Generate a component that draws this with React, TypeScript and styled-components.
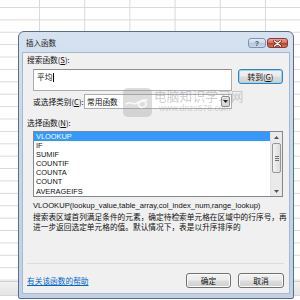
import React from "react";
import styled, { createGlobalStyle } from "styled-components";

const GlobalStyle = createGlobalStyle`
  html, body {
    margin: 0;
    padding: 0;
  }
  body {
    width: 300px;
    height: 300px;
    overflow: hidden;
    font-family: "Noto Sans CJK SC", "Liberation Sans", sans-serif;
  }
`;

const CJK = `"Noto Sans CJK SC", "Liberation Sans", sans-serif`;
const LATIN = `"Liberation Sans", "Noto Sans CJK SC", sans-serif`;

const Screen = styled.div`
  position: relative;
  width: 300px;
  height: 300px;
  overflow: hidden;
  background: #fff;
  display: flex;
  flex-direction: column;
`;

const Sheet = styled.div`
  height: 281px;
  background-color: #fff;
  background-image: linear-gradient(to right, #d9d9d9 1px, transparent 1px),
    linear-gradient(to bottom, #d9d9d9 1px, transparent 1px);
  background-size: 45.2px 100%, 100% 12.4px;
  background-position: 39px 0, 0 7px;
`;

const TabBar = styled.div`
  height: 13px;
  background: linear-gradient(#f1f1f1, #e4e4e4);
  border-top: 1px solid #cfcfcf;
  border-bottom: 1px solid #d6d6d6;
`;

const Dialog = styled.div`
  position: absolute;
  left: 18px;
  top: 31px;
  width: 276px;
  height: 268px;
  box-sizing: border-box;
  border: 1px solid #5b6e84;
  border-radius: 6px 6px 2px 2px;
  background: linear-gradient(180deg, #d6e2f0 0%, #c7d7eb 35%, #bfd1e8 100%);
  padding: 0 3px 4px;
  display: flex;
  flex-direction: column;
`;

const TitleBar = styled.div`
  height: 20px;
  display: flex;
  align-items: center;
  padding-left: 4px;
`;

const Title = styled.span`
  font-family: ${CJK};
  font-size: 7.5px;
  color: #1b1b1b;
`;

const Caption = styled.div`
  margin-left: auto;
  margin-right: 2px;
  align-self: flex-start;
  margin-top: 6px;
  display: flex;
  gap: 1px;
`;

const CaptionButton = styled.div<{ $close?: boolean; $w: number }>`
  width: ${(p) => p.$w}px;
  height: 10px;
  box-sizing: border-box;
  border: 1px solid ${(p) => (p.$close ? "#8a3a30" : "#7e93ad")};
  border-radius: 3px;
  background: ${(p) =>
    p.$close
      ? "linear-gradient(#e8a699 0%, #d5705f 45%, #c2402d 55%, #d3785c 100%)"
      : "linear-gradient(#e4ecf5 0%, #cbd9ea 45%, #b5c8df 55%, #c8d8ea 100%)"};
  display: flex;
  align-items: center;
  justify-content: center;
  font-family: ${LATIN};
  font-size: 7px;
  font-weight: bold;
  color: #3c4e66;
`;

const Client = styled.div`
  flex: 1;
  background: #f0f0f0;
  border: 1px solid #a7b9cf;
  padding: 0 5px 0 4px;
  display: flex;
  flex-direction: column;
  font-family: ${CJK};
  font-size: 7.7px;
  color: #111;
`;

const Label = styled.div<{ $top: number }>`
  margin-top: ${(p) => p.$top}px;
  line-height: 10px;
  height: 10px;
  white-space: nowrap;
`;

const Row = styled.div<{ $top: number }>`
  margin-top: ${(p) => p.$top}px;
  margin-left: 6px;
  display: flex;
  align-items: flex-start;
`;

const SearchBox = styled.div`
  width: 199px;
  height: 22px;
  box-sizing: border-box;
  border: 1px solid #abadb3;
  border-top-color: #8e8f8f;
  background: #fff;
  padding: 2px 3px;
  line-height: 10px;
  display: flex;
  align-items: flex-start;
`;

const Caret = styled.span`
  display: inline-block;
  width: 1px;
  height: 9px;
  background: #000;
  margin-left: 1px;
  margin-top: 1px;
`;

const Button = styled.div<{ $default?: boolean; $w: number }>`
  width: ${(p) => p.$w}px;
  height: 15px;
  box-sizing: border-box;
  border: 1px solid ${(p) => (p.$default ? "#3c7fb1" : "#707070")};
  box-shadow: ${(p) => (p.$default ? "inset 0 0 0 1px #9fd5f4" : "inset 0 0 0 1px #fbfbfb")};
  border-radius: 3px;
  background: linear-gradient(#f2f2f2 0%, #ebebeb 48%, #dddddd 52%, #cfcfcf 100%);
  display: flex;
  align-items: center;
  justify-content: center;
  font-size: 7.7px;
  line-height: 10px;
  color: #111;
`;

const SearchButton = styled(Button)`
  margin-left: 6px;
`;

const CategoryLabel = styled.div`
  width: 51px;
  line-height: 15px;
  white-space: nowrap;
`;

const Select = styled.div`
  width: 148px;
  height: 15px;
  box-sizing: border-box;
  border: 1px solid #abadb3;
  background: #fff;
  display: flex;
  align-items: center;
  padding-left: 2px;
`;

const SelectText = styled.span`
  flex: 1;
  line-height: 10px;
`;

const SelectArrow = styled.div`
  width: 9px;
  height: 11px;
  margin-right: 1px;
  box-sizing: border-box;
  border: 1px solid #8f8f8f;
  border-radius: 2px;
  background: linear-gradient(#f2f2f2, #d6d6d6);
  display: flex;
  align-items: center;
  justify-content: center;
`;

const ListBox = styled.div`
  margin-top: 3px;
  margin-left: 6px;
  width: 250px;
  height: 66px;
  box-sizing: border-box;
  border: 1px solid #828790;
  background: #fff;
  display: flex;
`;

const List = styled.ul`
  list-style: none;
  margin: 0;
  padding: 0;
  flex: 1;
  overflow: hidden;
  font-family: ${LATIN};
  font-size: 7.4px;
`;

const ListItem = styled.li<{ $selected?: boolean }>`
  height: 9.1px;
  line-height: 9.1px;
  padding-left: 2px;
  background: ${(p) => (p.$selected ? "#3399ff" : "transparent")};
  color: ${(p) => (p.$selected ? "#fff" : "#111")};
`;

const ScrollBar = styled.div`
  width: 11px;
  background: #eaeaea;
  border-left: 1px solid #e0e0e0;
  display: flex;
  flex-direction: column;
  align-items: center;
`;

const ScrollArrow = styled.div`
  height: 10px;
  width: 100%;
  display: flex;
  align-items: center;
  justify-content: center;
`;

const Thumb = styled.div`
  margin-top: 1px;
  width: 9px;
  height: 30px;
  box-sizing: border-box;
  border: 1px solid #979797;
  border-radius: 2px;
  background: linear-gradient(to right, #f3f3f3, #dcdcdc);
  display: flex;
  flex-direction: column;
  align-items: center;
  justify-content: center;
  gap: 1px;
`;

const Grip = styled.div`
  width: 4px;
  height: 1px;
  background: #707070;
`;

const Spacer = styled.div`
  flex: 1;
`;

const Signature = styled.div`
  margin-top: 4px;
  margin-left: 6px;
  font-family: ${LATIN};
  font-size: 7.6px;
  line-height: 10px;
  white-space: nowrap;
`;

const Description = styled.div`
  margin-top: 1px;
  margin-left: 6px;
  line-height: 10px;
  white-space: nowrap;
`;

const Footer = styled.div`
  height: 30px;
  box-sizing: border-box;
  border-top: 1px solid #dcdcdc;
  padding-top: 9px;
  display: flex;
  align-items: flex-start;
  gap: 7px;
`;

const HelpLink = styled.a`
  color: #0066cc;
  text-decoration: underline;
  line-height: 15px;
  margin-right: auto;
  cursor: pointer;
`;

const Watermark = styled.div`
  position: absolute;
  left: 123px;
  top: 88px;
  display: flex;
  gap: 2px;
  pointer-events: none;
`;

const WatermarkText = styled.div`
  display: flex;
  flex-direction: column;
`;

const WatermarkTitle = styled.span`
  font-family: ${CJK};
  font-size: 12.6px;
  line-height: 15px;
  color: rgba(130, 130, 130, 0.4);
  letter-spacing: 0.2px;
`;

const WatermarkUrl = styled.span`
  font-family: ${LATIN};
  font-size: 8.6px;
  line-height: 10px;
  margin-left: 5px;
  color: rgba(130, 130, 130, 0.34);
`;

const functions = ["VLOOKUP", "IF", "SUMIF", "COUNTIF", "COUNTA", "COUNT", "AVERAGEIFS"];

export default function App() {
  return (
    <>
      <GlobalStyle />
      <Screen>
        <Sheet />
        <TabBar />
        <Dialog>
          <TitleBar>
            <Title>插入函数</Title>
            <Caption>
              <CaptionButton $w={18}>?</CaptionButton>
              <CaptionButton $w={21} $close>
                <svg width="9" height="7" viewBox="0 0 9 7">
                  <path d="M1.5 1 L7.5 6 M7.5 1 L1.5 6" stroke="#5a1a12" strokeWidth="2.6" strokeLinecap="round" />
                  <path d="M1.5 1 L7.5 6 M7.5 1 L1.5 6" stroke="#fff" strokeWidth="1.4" strokeLinecap="round" />
                </svg>
              </CaptionButton>
            </Caption>
          </TitleBar>
          <Client>
            <Label $top={2}>
              搜索函数(<u>S</u>):
            </Label>
            <Row $top={4}>
              <SearchBox>
                平均
                <Caret />
              </SearchBox>
              <SearchButton $w={45} $default>
                转到(<u>G</u>)
              </SearchButton>
            </Row>
            <Row $top={3}>
              <CategoryLabel>
                或选择类别(<u>C</u>):
              </CategoryLabel>
              <Select>
                <SelectText>常用函数</SelectText>
                <SelectArrow>
                  <svg width="5" height="3" viewBox="0 0 5 3">
                    <path d="M0 0 H5 L2.5 3 Z" fill="#222" />
                  </svg>
                </SelectArrow>
              </Select>
            </Row>
            <Label $top={9}>
              选择函数(<u>N</u>):
            </Label>
            <ListBox>
              <List>
                {functions.map((f, i) => (
                  <ListItem key={f} $selected={i === 0}>
                    {f}
                  </ListItem>
                ))}
              </List>
              <ScrollBar>
                <ScrollArrow>
                  <svg width="5" height="3" viewBox="0 0 5 3">
                    <path d="M0 3 H5 L2.5 0 Z" fill="#555" />
                  </svg>
                </ScrollArrow>
                <Thumb>
                  <Grip />
                  <Grip />
                  <Grip />
                </Thumb>
                <Spacer />
                <ScrollArrow>
                  <svg width="5" height="3" viewBox="0 0 5 3">
                    <path d="M0 0 H5 L2.5 3 Z" fill="#555" />
                  </svg>
                </ScrollArrow>
              </ScrollBar>
            </ListBox>
            <Signature>VLOOKUP(lookup_value,table_array,col_index_num,range_lookup)</Signature>
            <Description>
              搜索表区域首列满足条件的元素，确定待检索单元格在区域中的行序号，再
              <br />
              进一步返回选定单元格的值。默认情况下，表是以升序排序的
            </Description>
            <Spacer />
            <Footer>
              <HelpLink>有关该函数的帮助</HelpLink>
              <Button $w={45}>确定</Button>
              <Button $w={46}>取消</Button>
            </Footer>
          </Client>
        </Dialog>
        <Watermark>
          <svg width="29" height="29" viewBox="0 0 29 29">
            <rect x="0" y="0" width="29" height="29" rx="5" fill="rgba(150,150,150,0.32)" />
            <path
              d="M3 16 C7 12 10 18 14 15 C17 13 22 12 23 15 C24 19 18 21 16 18 C14 15 19 11 24 12"
              stroke="rgba(255,255,255,0.85)"
              strokeWidth="1.6"
              fill="none"
              strokeLinecap="round"
            />
          </svg>
          <WatermarkText>
            <WatermarkTitle>电脑知识学习网</WatermarkTitle>
            <WatermarkUrl>www.dnzs678.com</WatermarkUrl>
          </WatermarkText>
        </Watermark>
      </Screen>
    </>
  );
}
